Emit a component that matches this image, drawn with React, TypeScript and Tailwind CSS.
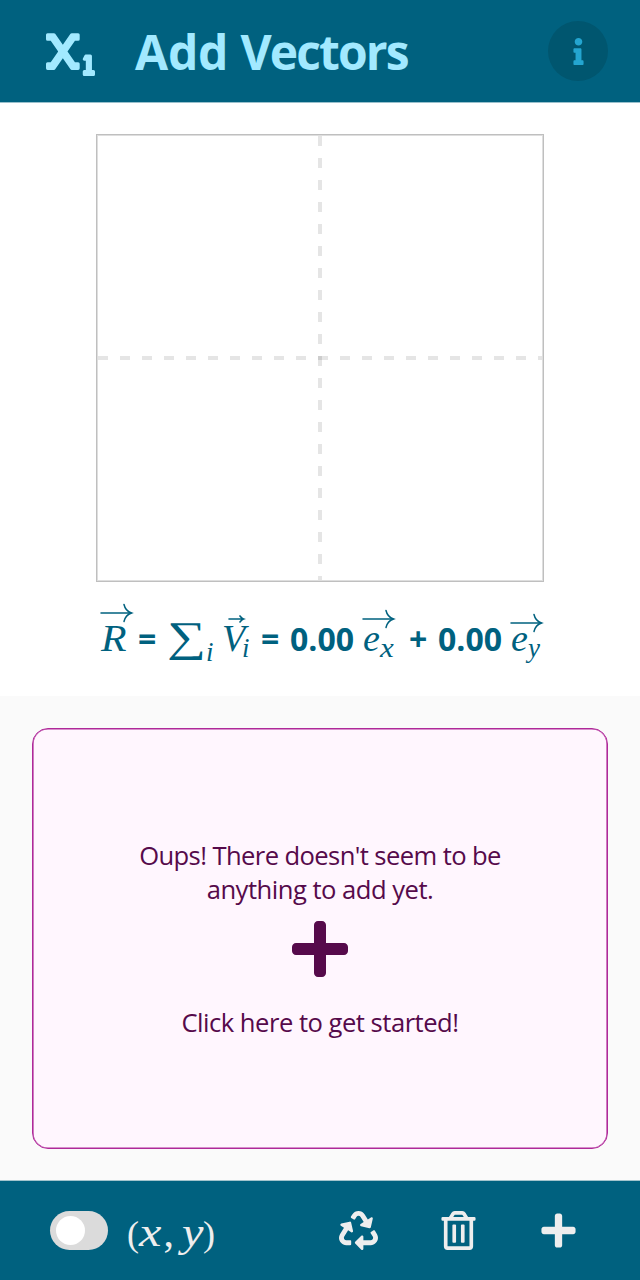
import type { ReactNode } from "react";
import { FaInfo, FaPlus, FaRecycle, FaRegTrashAlt, FaSubscript } from "react-icons/fa";

const Arrow = ({ className }: { className: string }) => (
  <svg className={`absolute ${className}`} width="34" height="20" viewBox="0 0 34 20" fill="none" stroke="currentColor" strokeLinecap="round">
    <path d="M1 10H31" strokeWidth="1.5" />
    <path d="M24 1.5C25 6 27 8.5 31.5 10C27 11.5 25 14 24 18.5" strokeWidth="1.5" />
  </svg>
);

const SmallArrow = ({ className }: { className: string }) => (
  <svg className={`absolute ${className}`} width="18" height="10" viewBox="0 0 18 10" fill="none" stroke="currentColor" strokeLinecap="round">
    <path d="M1 5H15M12 2C13 3.5 14 4.5 15.5 5C14 5.5 13 6.5 12 8" strokeWidth="1.6" />
  </svg>
);

const Term = ({ className, children }: { className: string; children: ReactNode }) => (
  <span className={`relative block shrink-0 whitespace-nowrap ${className}`}>{children}</span>
);

const math = "font-['Liberation_Serif',serif] font-normal italic";

function Header() {
  return (
    <header className="flex h-[102px] items-center bg-[#00617f] pr-8 pl-[46px] text-[#a2e9ff]">
      <FaSubscript className="size-[49px]" />
      <h1 className="mt-[2px] ml-10 text-[48px] leading-none font-bold">
        <span className="tracking-[-0.2px]">Add </span>
        <span className="tracking-[-1.9px]">Vectors</span>
      </h1>
      <button className="ml-auto flex size-[60px] items-center justify-center rounded-full bg-[#00566f] text-[#24a5d0]">
        <FaInfo className="size-[27px]" />
      </button>
    </header>
  );
}

function Plot() {
  return (
    <div className="mx-auto mt-[31px] size-[448px] border border-[#bfbfbf]">
      <svg className="block size-full border border-[#dedede]" viewBox="98 136 444 444" fill="none" stroke="#000" strokeOpacity="0.1" strokeWidth="4">
        <path d="M98 358H542" strokeDasharray="10 12" />
        <path d="M320 136V580" strokeDasharray="10 12" />
      </svg>
    </div>
  );
}

function Formula() {
  return (
    <div className="mt-[22px] flex h-[92px] items-baseline pt-[12px] pl-[101px] text-[32px] leading-[38px] font-bold text-[#00617f]">
      <Term className="w-[37px]">
        <span className={`${math} inline-block origin-left scale-x-110 text-[38px]`}>R</span>
        <Arrow className="-top-[16px] -left-px" />
      </Term>
      <Term className="w-[29px]">=</Term>
      <Term className="w-[39px]">
        <span className="inline-block origin-left scale-x-130 font-['Liberation_Serif',serif] text-[42px] leading-none font-normal">∑</span>
      </Term>
      <Term className="w-[16px]">
        <span className={`${math} relative top-[10px] text-[27px]`}>i</span>
      </Term>
      <Term className="w-[19px]">
        <span className={`${math} text-[38px]`}>V</span>
        <SmallArrow className="-top-[5px] left-[6px]" />
      </Term>
      <Term className="w-[20px]">
        <span className={`${math} relative top-[6px] left-px text-[27px]`}>i</span>
      </Term>
      <Term className="w-[29px]">=</Term>
      <Term className="w-[73px]">0.00</Term>
      <Term className="w-[17px]">
        <span className={`${math} text-[38px]`}>e</span>
        <Arrow className="-top-[10px] -left-px" />
      </Term>
      <Term className="w-[29px]">
        <span className={`${math} relative top-[6px] inline-block origin-left scale-x-115 text-[27px]`}>x</span>
      </Term>
      <Term className="w-[29px]">+</Term>
      <Term className="w-[73px]">0.00</Term>
      <Term className="w-[17px]">
        <span className={`${math} text-[38px]`}>e</span>
        <Arrow className="-top-[6px] -left-px" />
      </Term>
      <Term className="w-[16px]">
        <span className={`${math} relative top-[6px] inline-block origin-left text-[27px]`}>y</span>
      </Term>
    </div>
  );
}

function EmptyCard() {
  return (
    <button className="flex h-[421px] w-full flex-col items-center rounded-2xl border border-[#af2999] bg-[#fff6fe] pt-[110px] text-[25.6px] leading-[34px] text-[#560a4b] inset-shadow-[0_0_0_0.6px_#af2999]">
      <span className="tracking-[-0.6px]">Oups! There doesn't seem to be</span>
      <span className="tracking-[-0.5px]">anything to add yet.</span>
      <FaPlus className="mt-[10px] size-16" />
      <span className="mt-[25px] tracking-[-0.5px]">Click here to get started!</span>
    </button>
  );
}

function Footer() {
  return (
    <footer className="flex h-[99px] items-center bg-[#00617f] pl-[50px] text-[#eee]">
      <button role="switch" aria-checked="false" className="flex h-[39px] w-[58px] items-center rounded-full bg-[#dbdbdb] pl-[6px]">
        <span className="size-[29px] rounded-full bg-white" />
      </button>
      <div className="mt-[2px] ml-[19px] flex w-[88px] items-baseline font-['Liberation_Serif',serif] text-[42px] leading-none">
        <span className="w-[12px] text-[36px]">(</span>
        <span className="w-[25px] origin-left scale-x-120 italic">x</span>
        <span className="w-[19px]">,</span>
        <span className="w-[21px] origin-left scale-x-115 italic">y</span>
        <span className="text-[36px]">)</span>
      </div>
      <FaRecycle className="ml-[124px] size-[39px]" />
      <FaRegTrashAlt className="ml-[61px] size-[39px]" />
      <FaPlus className="ml-[61px] size-[39px]" />
    </footer>
  );
}

export default function App() {
  return (
    <div className="flex h-[1280px] w-[640px] flex-col overflow-hidden bg-[#fafafa] font-['Open_Sans','Noto_Sans',sans-serif]">
      <Header />
      <div className="h-px shrink-0 bg-[#99c0cc]" />
      <section className="h-[593px] overflow-hidden bg-white">
        <Plot />
        <Formula />
      </section>
      <main className="h-[484px] px-8 pt-8">
        <EmptyCard />
      </main>
      <div className="h-px shrink-0 bg-[#a3c4cd]" />
      <Footer />
    </div>
  );
}
